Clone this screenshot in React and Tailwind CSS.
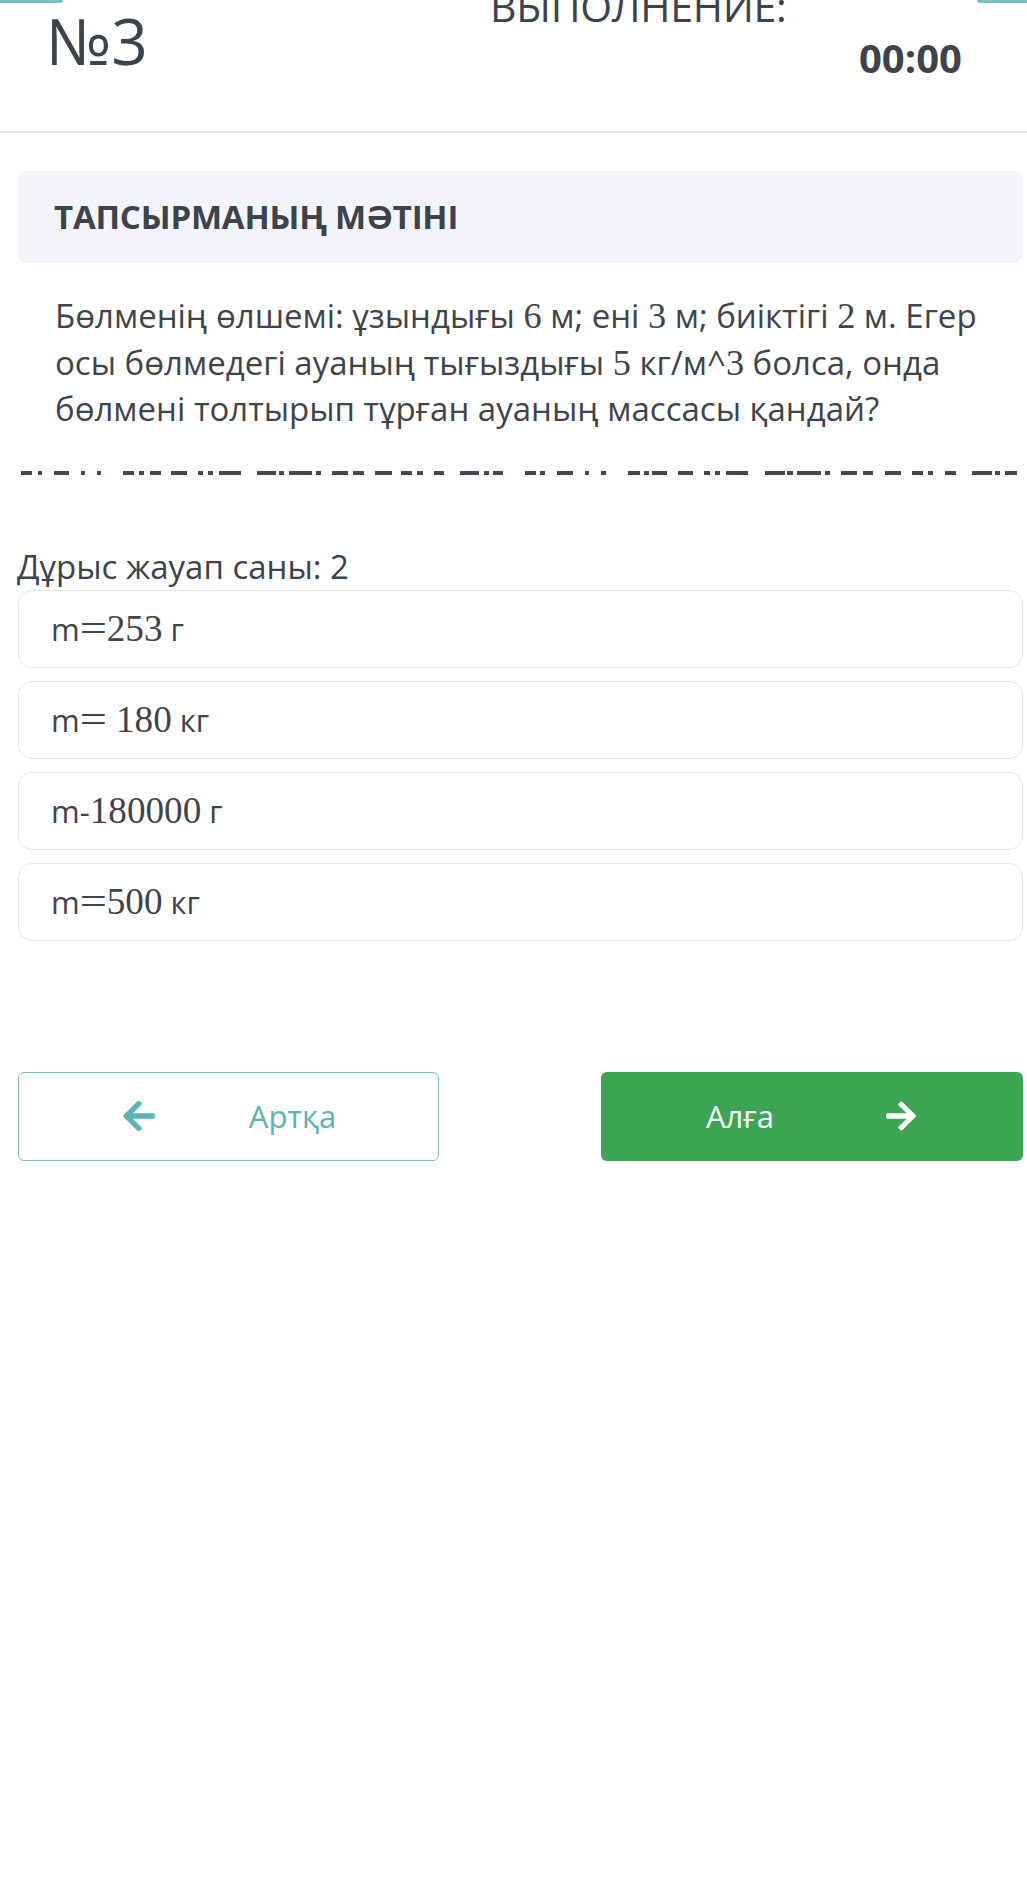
import React from "react";
import { FaArrowLeft, FaArrowRight } from "react-icons/fa";

const DASHES = [
  [21, 32], [38, 42], [54, 69], [81, 85], [97, 101], [123, 134], [139, 144], [150, 161], [171, 187], [198, 203], [208, 213], [219, 241], [257, 276], [279, 284], [289, 312], [316, 321], [332, 348], [353, 364], [375, 392], [401, 412], [417, 423], [434, 444], [460, 479], [484, 489], [493, 503],
  [525, 536], [540, 545], [557, 573], [585, 589], [601, 606], [628, 640], [644, 649], [652, 667], [678, 693], [704, 710], [715, 720], [726, 748], [765, 785], [787, 793], [797, 821], [825, 830], [841, 857], [863, 873], [885, 901], [912, 923], [928, 933], [945, 956], [972, 992], [995, 1000], [1005, 1017],
];

function N({ children }) {
  return <span className="font-['Liberation_Serif',serif] text-[1.1em]">{children}</span>;
}

function M({ children }) {
  return <span className="font-['Liberation_Serif',serif] text-[1.2em]">{children}</span>;
}

function Eq() {
  return <span className="font-['Liberation_Serif',serif] text-[1.2em] inline-block scale-x-[1.3] mx-[3px]">=</span>;
}

function Option({ children }) {
  return (
    <div className="ml-[18px] mr-[4px] h-[78px] flex items-center pl-[32px] border border-[#e3e4e6] rounded-[14px] bg-white text-[31px] text-[#3f444b]">
      <span>{children}</span>
    </div>
  );
}

export default function App() {
  return (
    <div className="w-[1027px] min-h-[1886px] bg-white font-['Open_Sans',sans-serif] text-[#3d434b] overflow-hidden">
      {/* header */}
      <div className="relative h-[133px] border-b-2 border-[#e4e4e4]">
        <div className="absolute left-0 top-0 w-[63px] h-[3px] bg-[#7cc1be] rounded-br-[6px]" />
        <div className="absolute right-0 top-0 w-[50px] h-[3px] bg-[#7cc1be] rounded-bl-[6px]" />
        <div className="flex items-start">
          <div className="w-[490px] pl-[46px] pt-[9px] text-[64px] leading-none font-normal">№3</div>
          <div className="flex flex-col">
            <div className="-mt-[14px] text-[41px] leading-none font-normal tracking-[-0.3px]">ВЫПОЛНЕНИЕ:</div>
            <div className="mt-[11px] ml-[369px] text-[40px] leading-none font-bold">00:00</div>
          </div>
        </div>
      </div>

      {/* task title */}
      <div className="mt-[38px] ml-[18px] mr-[4px] h-[92px] bg-[#f3f4f7] rounded-lg flex items-center pl-[36px]">
        <span className="text-[33px] font-bold tracking-[-0.2px]">ТАПСЫРМАНЫҢ МӘТІНІ</span>
      </div>

      {/* question */}
      <div className="mt-[30px] pl-[55px] pr-[30px] text-[33px] leading-[45.5px] text-[#3f444b]">
        Бөлменің өлшемі: ұзындығы <N>6</N> м; ені <N>3</N> м; биіктігі <N>2</N> м. Егер осы бөлмедегі ауаның тығыздығы <N>5</N> кг/м^<N>3</N> болса, онда бөлмені толтырып тұрған ауаның массасы қандай?
      </div>

      {/* dashed separator */}
      <svg className="block mt-[39px]" width="1027" height="4" viewBox="0 0 1027 4">
        {DASHES.map(([a, b], i) => (
          <rect key={i} x={a} y="0" width={b - a} height="4" fill="#44474d" />
        ))}
      </svg>

      <div className="mt-[69px] pl-[17px] text-[33px] leading-[45px] text-[#3d434b]">
        Дұрыс жауап саны: 2
      </div>

      <div className="mt-[1px] flex flex-col gap-[13px]">
        <Option>m<Eq /><M>253</M> г</Option>
        <Option>m<Eq /><M> 180</M> кг</Option>
        <Option>m-<M>180000</M> г</Option>
        <Option>m<Eq /><M>500</M> кг</Option>
      </div>

      {/* buttons */}
      <div className="mt-[131px] ml-[18px] mr-[4px] flex justify-between">
        <button className="w-[421px] h-[89px] border border-[#80bfc0] rounded-md bg-white flex items-center justify-center gap-[92px] text-[#5ab3b4]">
          <FaArrowLeft className="w-[36px] h-[36px]" />
          <span className="text-[31px]">Артқа</span>
        </button>
        <button className="w-[422px] h-[89px] rounded-md bg-[#3ca554] flex items-center justify-center gap-[110px] text-white">
          <span className="text-[31px]">Алға</span>
          <FaArrowRight className="w-[34px] h-[34px]" />
        </button>
      </div>
    </div>
  );
}
